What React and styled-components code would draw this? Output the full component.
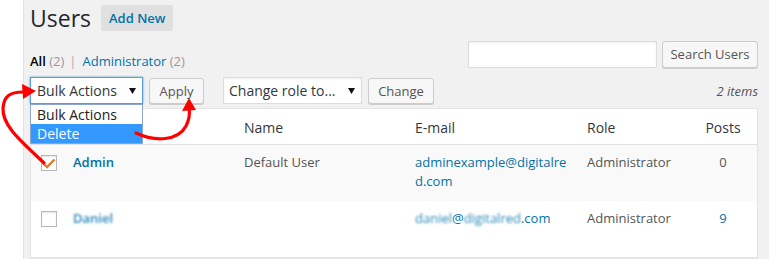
import React from 'react';
import styled, { createGlobalStyle } from 'styled-components';

const Global = createGlobalStyle`
  html, body { margin: 0; padding: 0; background: #fff; }
  body {
    font-family: "Open Sans", "Liberation Sans", Arial, sans-serif;
    font-size: 13px;
    color: #444;
  }
  * { box-sizing: border-box; }
`;

const Page = styled.div`
  position: relative;
  width: 769px;
  height: 259px;
  overflow: hidden;
  display: flex;
`;

const Gutter = styled.div`
  width: 23px;
  flex: none;
  background: #fff;
`;

const Main = styled.div`
  flex: 1;
  background: #f1f1f1;
  border-left: 1px solid #e2e2e2;
  padding: 5px 11px 0 6px;
  display: flex;
  flex-direction: column;
`;

const TitleRow = styled.div`
  display: flex;
  align-items: center;
  height: 26px;
  gap: 10px;
`;

const Title = styled.h1`
  margin: 0;
  font-size: 23px;
  font-weight: 400;
  line-height: 26px;
  color: #23282d;
`;

const AddNew = styled.a`
  height: 26px;
  line-height: 26px;
  padding: 0 8px;
  background: #e0e0e0;
  color: #0073aa;
  font-size: 13px;
  font-weight: 600;
  border-radius: 2px;
  text-decoration: none;
`;

const FilterRow = styled.div`
  margin-top: 10px;
  height: 27px;
  display: flex;
  justify-content: space-between;
  align-items: flex-start;
`;

const Views = styled.div`
  margin-top: 10px;
  line-height: 20px;
  font-size: 13px;
  display: flex;
  gap: 4px;
  color: #666;
`;

const ViewCurrent = styled.span`
  color: #000;
  font-weight: 600;
`;

const ViewLink = styled.span`
  color: #0073aa;
`;

const Count = styled.span`
  color: #999;
`;

const Sep = styled.span`
  color: #aaa;
  margin: 0 2px 0 1px;
`;

const SearchBox = styled.div`
  display: flex;
  gap: 5px;
`;

const SearchInput = styled.div`
  width: 189px;
  height: 27px;
  background: #fff;
  border: 1px solid #ddd;
  box-shadow: inset 0 1px 2px rgba(0, 0, 0, 0.07);
`;

const Button = styled.div`
  height: ${(p) => p.$h || 26}px;
  line-height: ${(p) => (p.$h || 26) - 2}px;
  width: ${(p) => (p.$w ? `${p.$w}px` : 'auto')};
  padding: 0 ${(p) => (p.$w ? 0 : 10)}px;
  text-align: center;
  background: #f7f7f7;
  border: 1px solid #ccc;
  border-radius: 3px;
  box-shadow: 0 1px 0 #ccc;
  color: #555;
  font-size: 13px;
  white-space: nowrap;
  margin-left: ${(p) => p.$ml || 0}px;
`;

const TableNav = styled.div`
  margin-top: 9px;
  height: 27px;
  display: flex;
  align-items: center;
`;

const SelectWrap = styled.div`
  position: relative;
  margin-left: ${(p) => p.$ml || 0}px;
`;

const SelectBox = styled.div`
  width: ${(p) => p.$w}px;
  height: 27px;
  display: flex;
  align-items: center;
  justify-content: space-between;
  padding: 0 6px 0 ${(p) => p.$pl || 6}px;
  background: #fff;
  border: 1px solid ${(p) => (p.$focused ? '#5b9dd9' : '#ddd')};
  box-shadow: ${(p) =>
    p.$focused ? '0 0 2px rgba(30,140,190,.8)' : 'inset 0 1px 2px rgba(0,0,0,.07)'};
  font-size: 14px;
  color: #32373c;
`;

const DropList = styled.div`
  position: absolute;
  top: 27px;
  left: 0;
  width: 113px;
  background: #fff;
  border: 1px solid #8aa6cf;
  z-index: 5;
`;

const DropOption = styled.div`
  height: 19px;
  line-height: 19px;
  padding-left: 6px;
  font-size: 14px;
  color: ${(p) => (p.$active ? '#fff' : '#222')};
  background: ${(p) => (p.$active ? '#3399ff' : '#fff')};
`;

const ItemCount = styled.div`
  margin-left: auto;
  font-style: italic;
  color: #555;
  font-size: 13px;
`;

const Table = styled.div`
  margin-top: 4px;
  background: #fff;
  border: 1px solid #e5e5e5;
  box-shadow: 0 1px 1px rgba(0, 0, 0, 0.04);
`;

const RowGrid = styled.div`
  display: grid;
  grid-template-columns: 42px 171px 171px 172px 102px 68px;
`;

const HeadRow = styled(RowGrid)`
  height: 36px;
  border-bottom: 1px solid #e1e1e1;
  font-size: 14px;
  color: #32373c;
  line-height: 21px;
  & > div { padding-top: 8px; }
`;

const Row = styled(RowGrid)`
  height: 56px;
  background: ${(p) => (p.$alt ? '#f9f9f9' : '#fff')};
  line-height: 19px;
  font-size: 13px;
  color: #555;
  & > div { padding-top: 8px; }
`;

const Cell = styled.div`
  text-align: ${(p) => p.$align || 'left'};
  padding-right: ${(p) => p.$pr || 0}px;
  word-break: ${(p) => (p.$break ? 'break-all' : 'normal')};
`;

const CheckCell = styled.div`
  && { padding-top: ${(p) => p.$top || 10}px; }
  padding-left: 10px;
`;

const CheckBox = styled.div`
  width: 16px;
  height: 16px;
  border: 1px solid #b4b9be;
  background: #fff;
  box-shadow: inset 0 1px 2px rgba(0, 0, 0, 0.1);
  position: relative;
`;

const UserLink = styled.span`
  color: #0073aa;
  font-weight: 600;
`;

const LinkText = styled.span`
  color: #0073aa;
`;

const Blur = styled.span`
  filter: blur(1.3px);
  opacity: 0.85;
`;

const Overlay = styled.svg`
  position: absolute;
  left: 0;
  top: 0;
  pointer-events: none;
  z-index: 10;
`;

const Caret = () => (
  <svg width="7" height="6" viewBox="0 0 7 6">
    <polygon points="0,0 7,0 3.5,6" fill="#111" />
  </svg>
);

const Check = () => (
  <svg width="14" height="14" viewBox="0 0 14 14" style={{ position: 'absolute', left: 0, top: 0 }}>
    <polyline points="1.5,7.5 5,11 12.5,3.5" fill="none" stroke="#e07b2a" strokeWidth="2.4" />
  </svg>
);

export default function App() {
  return (
    <>
      <Global />
      <Page>
        <Gutter />
        <Main>
          <TitleRow>
            <Title>Users</Title>
            <AddNew>Add New</AddNew>
          </TitleRow>
          <FilterRow>
            <Views>
              <span>
                <ViewCurrent>All</ViewCurrent> <Count>(2)</Count>
              </span>
              <Sep>|</Sep>
              <span>
                <ViewLink>Administrator</ViewLink> <Count>(2)</Count>
              </span>
            </Views>
            <SearchBox>
              <SearchInput />
              <Button $h={27} $w={96}>Search Users</Button>
            </SearchBox>
          </FilterRow>
          <TableNav>
            <SelectWrap>
              <SelectBox $w={113} $focused>
                <span>Bulk Actions</span>
                <Caret />
              </SelectBox>
              <DropList>
                <DropOption>Bulk Actions</DropOption>
                <DropOption $active>Delete</DropOption>
              </DropList>
            </SelectWrap>
            <Button $ml={6} $w={55}>Apply</Button>
            <SelectWrap $ml={19}>
              <SelectBox $w={139} $pl={5}>
                <span>Change role to...</span>
                <Caret />
              </SelectBox>
            </SelectWrap>
            <Button $ml={6} $w={66}>Change</Button>
            <ItemCount>2 items</ItemCount>
          </TableNav>
          <Table>
            <HeadRow>
              <CheckCell $top={9}>
                <CheckBox />
              </CheckCell>
              <Cell>Username</Cell>
              <Cell>Name</Cell>
              <Cell>E-mail</Cell>
              <Cell>Role</Cell>
              <Cell $align="center">Posts</Cell>
            </HeadRow>
            <Row $alt>
              <CheckCell>
                <CheckBox>
                  <Check />
                </CheckBox>
              </CheckCell>
              <Cell>
                <UserLink>Admin</UserLink>
              </Cell>
              <Cell>Default User</Cell>
              <Cell $pr={20} $break>
                <LinkText>adminexample@digitalred.com</LinkText>
              </Cell>
              <Cell>Administrator</Cell>
              <Cell $align="center">0</Cell>
            </Row>
            <Row>
              <CheckCell>
                <CheckBox />
              </CheckCell>
              <Cell>
                <UserLink>
                  <Blur>Daniel</Blur>
                </UserLink>
              </Cell>
              <Cell />
              <Cell>
                <LinkText>
                  <Blur>daniel</Blur>@<Blur>digitalred</Blur>.com
                </LinkText>
              </Cell>
              <Cell>Administrator</Cell>
              <Cell $align="center">
                <LinkText>9</LinkText>
              </Cell>
            </Row>
          </Table>
        </Main>
        <Overlay width="769" height="259" viewBox="0 0 769 259">
          <g fill="none" stroke="#f00" strokeWidth="3.2" strokeLinecap="round">
            <path d="M 44 163 C 22 142, 2 126, 3 108 C 4 96, 10 92, 23 92" />
            <path d="M 136 133 C 155 142, 178 141, 186 126 C 190 118, 190 113, 189 108" />
          </g>
          <g fill="#f00">
            <polygon points="36,91 22,84 23,99" />
            <polygon points="189,98 182,111 196,110" />
          </g>
        </Overlay>
      </Page>
    </>
  );
}
